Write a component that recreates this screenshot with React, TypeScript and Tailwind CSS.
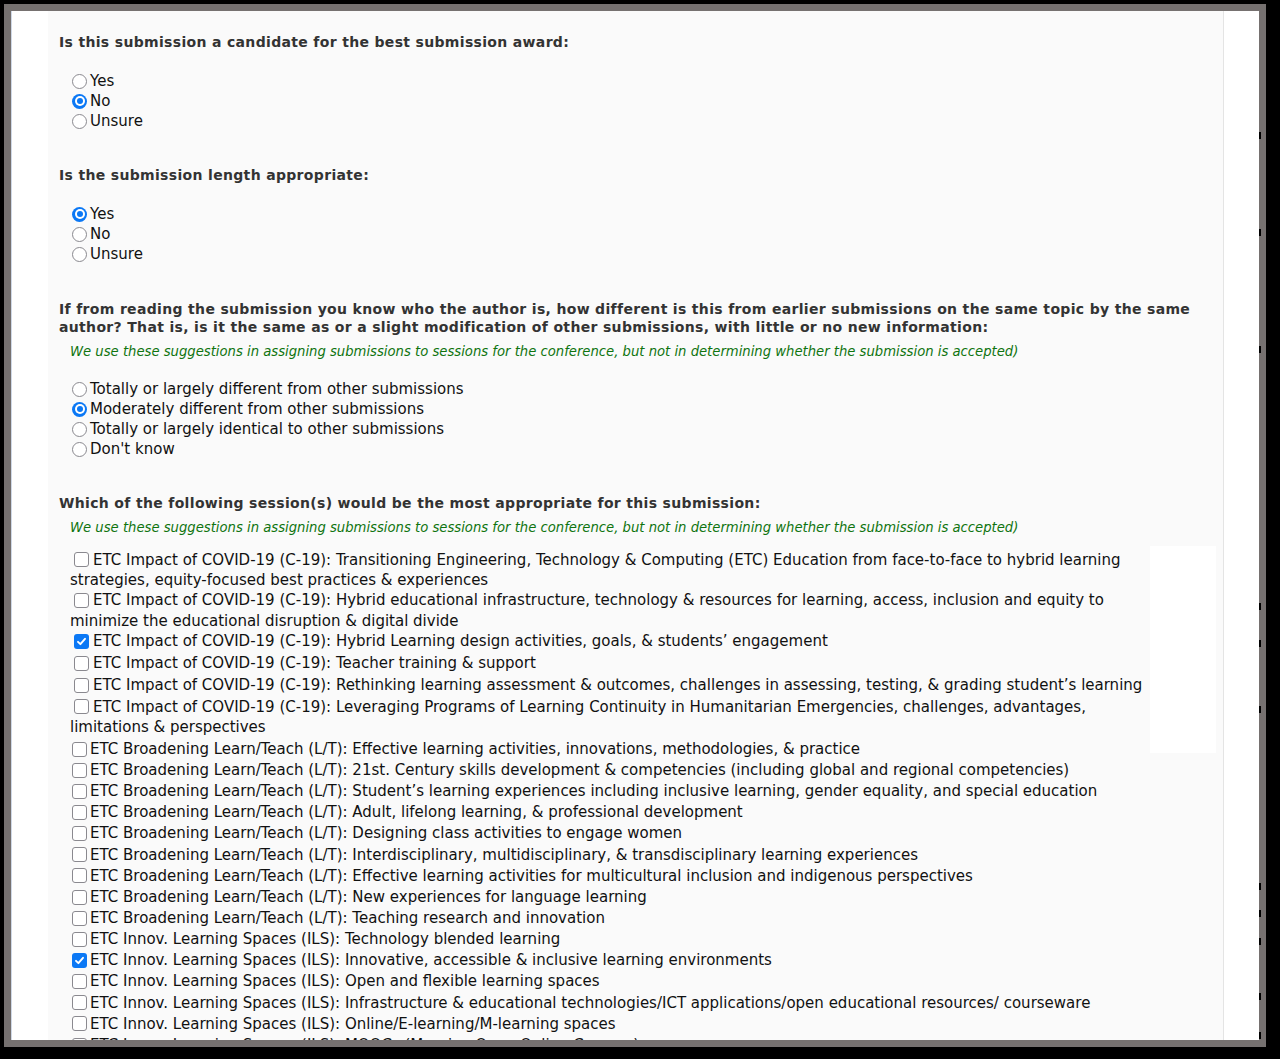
import React from "react";

const F = { fontFamily: '"DejaVu Sans", Verdana, sans-serif' };

function Radio({ checked }: { checked?: boolean }) {
  return checked ? (
    <span className="inline-flex items-center justify-center w-[15px] h-[15px] rounded-full bg-[#0b78f5] shrink-0 align-middle">
      <span className="w-[10px] h-[10px] rounded-full bg-white flex items-center justify-center">
        <span className="w-[6px] h-[6px] rounded-full bg-[#0b78f5]" />
      </span>
    </span>
  ) : (
    <span className="inline-block w-[15px] h-[15px] rounded-full border-[1.5px] border-[#8a898f] bg-white shrink-0" />
  );
}

function Check({ checked }: { checked?: boolean }) {
  return checked ? (
    <span className="inline-flex items-center justify-center w-[15px] h-[15px] rounded-[3px] bg-[#0b78f5] shrink-0">
      <svg width="11" height="11" viewBox="0 0 11 11">
        <path d="M2 5.8 L4.4 8.2 L9 2.8" stroke="white" strokeWidth="1.9" fill="none" strokeLinecap="round" strokeLinejoin="round" />
      </svg>
    </span>
  ) : (
    <span className="inline-block w-[15px] h-[15px] rounded-[3px] border-[1.5px] border-[#8a898f] bg-white shrink-0" />
  );
}

function RadioGroup({ options, selected }: { options: string[]; selected: number }) {
  return (
    <div className="pl-[13px]">
      {options.map((o, i) => (
        <div key={i} className="flex items-center h-[20px] text-[15px] text-[#111]">
          <Radio checked={i === selected} />
          <span className="ml-[3px]">{o}</span>
        </div>
      ))}
    </div>
  );
}

function Heading({ children }: { children: React.ReactNode }) {
  return <div className="text-[14px] font-bold leading-[18px] tracking-[0.33px] text-[#333] whitespace-nowrap">{children}</div>;
}

function Note() {
  return (
    <div className="pl-[11px] italic text-[13.2px] leading-[17px] text-[#0f740f] whitespace-nowrap">
      We use these suggestions in assigning submissions to sessions for the conference, but not in determining whether the submission is accepted)
    </div>
  );
}

const covid: { lines: string[]; checked?: boolean }[] = [
  {
    lines: [
      "ETC Impact of COVID-19 (C-19): Transitioning Engineering, Technology & Computing (ETC) Education from face-to-face to hybrid learning",
      "strategies, equity-focused best practices & experiences",
    ],
  },
  {
    lines: [
      "ETC Impact of COVID-19 (C-19): Hybrid educational infrastructure, technology & resources for learning, access, inclusion and equity to",
      "minimize the educational disruption & digital divide",
    ],
  },
  { lines: ["ETC Impact of COVID-19 (C-19): Hybrid Learning design activities, goals, & students’ engagement"], checked: true },
  { lines: ["ETC Impact of COVID-19 (C-19): Teacher training & support"] },
  {
    lines: [
      "ETC Impact of COVID-19 (C-19): Rethinking learning assessment & outcomes, challenges in assessing, testing, & grading student’s learning",
    ],
  },
  {
    lines: [
      "ETC Impact of COVID-19 (C-19): Leveraging Programs of Learning Continuity in Humanitarian Emergencies, challenges, advantages,",
      "limitations & perspectives",
    ],
  },
];

const others: { t: string; checked?: boolean }[] = [
  { t: "ETC Broadening Learn/Teach (L/T): Effective learning activities, innovations, methodologies, & practice" },
  { t: "ETC Broadening Learn/Teach (L/T): 21st. Century skills development & competencies (including global and regional competencies)" },
  { t: "ETC Broadening Learn/Teach (L/T): Student’s learning experiences including inclusive learning, gender equality, and special education" },
  { t: "ETC Broadening Learn/Teach (L/T): Adult, lifelong learning, & professional development" },
  { t: "ETC Broadening Learn/Teach (L/T): Designing class activities to engage women" },
  { t: "ETC Broadening Learn/Teach (L/T): Interdisciplinary, multidisciplinary, & transdisciplinary learning experiences" },
  { t: "ETC Broadening Learn/Teach (L/T): Effective learning activities for multicultural inclusion and indigenous perspectives" },
  { t: "ETC Broadening Learn/Teach (L/T): New experiences for language learning" },
  { t: "ETC Broadening Learn/Teach (L/T): Teaching research and innovation" },
  { t: "ETC Innov. Learning Spaces (ILS): Technology blended learning" },
  { t: "ETC Innov. Learning Spaces (ILS): Innovative, accessible & inclusive learning environments", checked: true },
  { t: "ETC Innov. Learning Spaces (ILS): Open and flexible learning spaces" },
  { t: "ETC Innov. Learning Spaces (ILS): Infrastructure & educational technologies/ICT applications/open educational resources/ courseware" },
  { t: "ETC Innov. Learning Spaces (ILS): Online/E-learning/M-learning spaces" },
  { t: "ETC Innov. Learning Spaces (ILS): MOOCs (Massive Open Online Courses)" },
];

const marks = [132, 229, 346, 603, 640, 706, 883, 910, 938, 993, 1032];

export default function App() {
  return (
    <div className="relative w-[1280px] h-[1059px] bg-black overflow-hidden" style={F}>
      <div className="relative ml-[4px] mt-[4px] w-[1262px] h-[1043px] bg-[#767170] p-[7px]">
        {marks.map((y) => (
          <span key={y} className="absolute left-[1255px] w-[2px] h-[7px] bg-black" style={{ top: y - 4 }} />
        ))}
        <div className="flex h-full bg-white overflow-hidden">
          <div className="w-[37px] shrink-0 bg-white border-l border-[#cfd8e6]" />
          <div className="w-[1176px] shrink-0 bg-[#fafafa] border-r border-[#e4e4e4] pl-[11px] pt-[22px]">
            <Heading>Is this submission a candidate for the best submission award:</Heading>
            <div className="h-[20px]" />
            <RadioGroup options={["Yes", "No", "Unsure"]} selected={1} />

            <div className="h-[35px]" />
            <Heading>Is the submission length appropriate:</Heading>
            <div className="h-[20px]" />
            <RadioGroup options={["Yes", "No", "Unsure"]} selected={0} />

            <div className="h-[36px]" />
            <Heading>
              If from reading the submission you know who the author is, how different is this from earlier submissions on the same topic by the same
              <br />
              author? That is, is it the same as or a slight modification of other submissions, with little or no new information:
            </Heading>
            <div className="h-[7px]" />
            <Note />
            <div className="h-[19px]" />
            <RadioGroup
              options={[
                "Totally or largely different from other submissions",
                "Moderately different from other submissions",
                "Totally or largely identical to other submissions",
                "Don't know",
              ]}
              selected={1}
            />

            <div className="h-[35px]" />
            <Heading>Which of the following session(s) would be the most appropriate for this submission:</Heading>
            <div className="h-[7px]" />
            <Note />
            <div className="h-[13.5px]" />

            <div className="flex">
              <div className="flex-1 pl-[11px] whitespace-nowrap text-[15px] text-[#111]">
                {covid.map((c, i) =>
                  c.lines[1] ? (
                    <div key={i}>
                      <div className="flex items-center h-[20.5px]">
                        <span className="ml-[4px] mr-[4px] flex">
                          <Check checked={c.checked} />
                        </span>
                        <span>{c.lines[0]}</span>
                      </div>
                      <div className="h-[20px] leading-[20px]">{c.lines[1]}</div>
                    </div>
                  ) : (
                    <div key={i} className="flex items-center h-[22px]">
                      <span className="ml-[4px] mr-[4px] flex">
                        <Check checked={c.checked} />
                      </span>
                      <span>{c.lines[0]}</span>
                    </div>
                  )
                )}
              </div>
              <div className="w-[66px] shrink-0 bg-white mr-[7px] mt-[-4px] h-[207px] mb-[-15px]" />
            </div>

            <div className="pt-[1px] pl-[13px] whitespace-nowrap text-[15px] text-[#111]">
              {others.map((o, i) => (
                <div key={i} className="flex items-center h-[21.15px]">
                  <Check checked={o.checked} />
                  <span className="ml-[3px]">{o.t}</span>
                </div>
              ))}
            </div>
          </div>
          <div className="flex-1 bg-white" />
        </div>
      </div>
    </div>
  );
}
